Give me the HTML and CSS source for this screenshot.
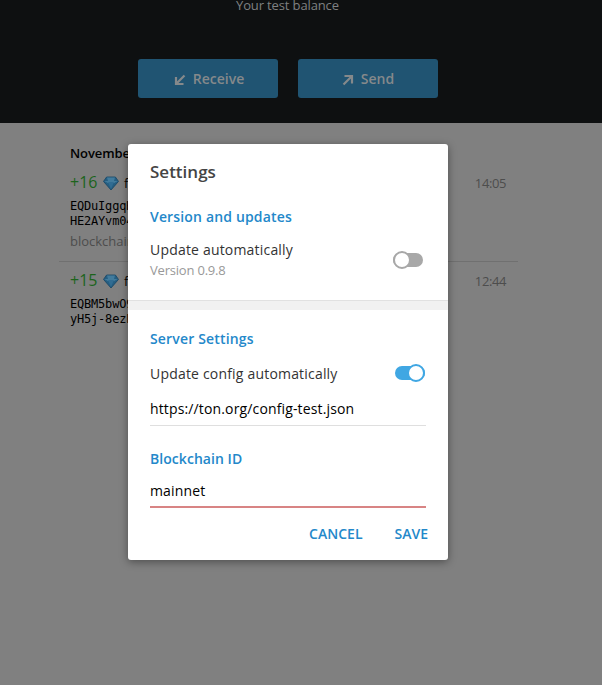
FILE: index.html
```html
<!DOCTYPE html>
<html lang="en">
<head>
<meta charset="utf-8">
<title>Wallet settings</title>
<link rel="stylesheet" href="styles.css">
</head>
<body>
<svg width="0" height="0" class="defs" aria-hidden="true">
  <symbol id="gem" viewBox="0 0 16 15">
    <path d="M3.6 1h8.8L15.5 5.4 8 14 .5 5.4z" fill="#255e82" stroke="#1c4968" stroke-width=".9" stroke-linejoin="round"/>
    <path d="M4 1.6h8L11 5H5z" fill="#427b9c"/>
    <path d="M1.2 5.2h13.6L8 8z" fill="#4d86a5"/>
    <path d="M5 6l3 7 3-7z" fill="#316c92"/>
  </symbol>
</svg>
<main class="wallet">
  <header class="top">
    <div class="balance">Your test balance</div>
    <div class="actions">
      <button class="action receive"><svg width="12" height="12" viewBox="0 0 12 12"><path d="M10.5 1.5L2 10M2 3v7h7.5"/></svg><span>Receive</span></button>
      <button class="action"><svg width="12" height="12" viewBox="0 0 12 12"><path d="M1.5 10.5L10 2M2.5 2H10v7.5"/></svg><span>Send</span></button>
    </div>
  </header>
  <section class="history">
    <h2 class="date">November</h2>
    <article class="entry">
      <div class="row"><span class="amount">+16</span><svg class="gem" width="16" height="15"><use href="#gem"/></svg><span class="from">from</span><time>14:05</time></div>
      <div class="address">EQDuIggqH<br>HE2AYvm04</div>
      <div class="fee">blockchain</div>
    </article>
    <article class="entry second">
      <div class="row"><span class="amount">+15</span><svg class="gem" width="16" height="15"><use href="#gem"/></svg><span class="from">from</span><time>12:44</time></div>
      <div class="address">EQBM5bwO9<br>yH5j-8ezE</div>
    </article>
  </section>
</main>
<div class="overlay">
  <div class="dialog" role="dialog">
    <section class="updates">
      <h1>Settings</h1>
      <h3>Version and updates</h3>
      <div class="option">
        <div><div class="label">Update automatically</div><div class="version">Version 0.9.8</div></div>
        <span class="toggle"></span>
      </div>
    </section>
    <div class="divider"></div>
    <section class="server">
      <h3>Server Settings</h3>
      <div class="option config">
        <div class="label">Update config automatically</div>
        <span class="toggle on"></span>
      </div>
      <div class="field url"><span>https://ton.org/config-test.json</span></div>
      <h3 class="chain-title">Blockchain ID</h3>
      <div class="field error"><span>mainnet</span></div>
      <div class="buttons"><button>CANCEL</button><button>SAVE</button></div>
    </section>
  </div>
</div>
</body>
</html>
```
FILE: styles.css
```css
*, *::before { box-sizing: border-box; }
body { margin: 0; height: 685px; overflow: hidden; background: #808080; color: #000; font: 14px/20px "Open Sans", sans-serif; position: relative; }
h1, h2, h3 { margin: 0; font-weight: 600; }
button { border: 0; padding: 0; background: none; font: inherit; }
.defs { position: absolute; }
.top { height: 123px; background: #0e1011; }
.balance { height: 59px; padding-left: 236px; font-size: 13px; line-height: 11px; letter-spacing: -.13px; color: #7f8081; white-space: nowrap; }
.actions { display: flex; gap: 20px; padding-left: 138px; }
.action { width: 140px; height: 39px; border-radius: 3px; background: #205472; color: #85898b; display: flex; align-items: center; justify-content: center; gap: 7px; font-weight: 600; }
.receive { padding-left: 2px; }
.action svg { fill: none; stroke: currentColor; stroke-width: 2.2; margin-top: 2px; }
.history { width: 459px; margin-left: 59px; padding-top: 20px; }
.date { padding-left: 11px; font-size: 13px; line-height: 20px; letter-spacing: -.1px; }
.entry { height: 98px; padding: 8px 11px 0; border-bottom: 1px solid #707070; margin-top: 1px; }
.entry.second { border: 0; margin-top: 0; }
.row { display: flex; align-items: center; height: 22px; }
.amount { width: 33px; font-size: 16px; line-height: 20px; margin-bottom: 2px; color: #1c641c; }
.from { margin-left: 5px; font-size: 13px; }
.row time { margin-left: auto; padding-right: 1px; color: #4d4d4d; font-size: 13px; letter-spacing: -.4px; }
.address { margin-top: 5px; font: 12px/15px "DejaVu Sans Mono", monospace; letter-spacing: -.2px; }
.fee { margin-top: 2px; line-height: 20px; font-size: 13px; color: #4d4d4d; }
.overlay { position: absolute; inset: 0; display: flex; justify-content: center; align-items: flex-start; padding: 144px 26px 0 0; }
.dialog { width: 320px; height: 416px; border-radius: 3px; background: #fff; overflow: hidden; box-shadow: 0 2px 8px rgba(0,0,0,.4); }
.updates { height: 156px; padding: 17px 22px 0; }
h1 { font-size: 17px; line-height: 22px; color: #444; }
h3 { font-size: 14px; line-height: 20px; letter-spacing: .16px; color: #2388ca; }
.updates h3 { margin-top: 24px; }
.option { display: flex; justify-content: space-between; align-items: center; }
.updates .option { margin-top: 13px; padding-right: 3px; }
.label { color: #333; letter-spacing: .19px; }
.version { font-size: 13px; letter-spacing: -.2px; color: #999; }
.toggle { position: relative; width: 30px; height: 14px; border-radius: 7px; background: #a8a8a8; }
.toggle::before { content: ""; position: absolute; left: 0; top: -2px; width: 18px; height: 18px; border: 2px solid #a8a8a8; border-radius: 50%; background: #fff; }
.toggle.on { background: #40a7e3; }
.toggle.on::before { left: auto; right: 0; border-color: #40a7e3; }
.divider { height: 10px; background: #f1f1f1; border-top: 1px solid #e1e1e1; }
.server { padding: 19px 22px 0; }
.config { height: 20px; margin-top: 14px; padding-right: 1px; }
.config .label { padding-top: 1px; }
.field { border-bottom: 1px solid #dfdfdf; color: #000; letter-spacing: .14px; }
.url { height: 43px; padding-top: 16px; }
.chain-title { margin-top: 23px; letter-spacing: .05px; }
.error { height: 39px; padding-top: 12px; border-bottom: 2px solid #d88484; }
.buttons { display: flex; justify-content: flex-end; gap: 32px; margin: 16px -2px 0; }
.buttons button { color: #2388ca; font-weight: 600; line-height: 20px; }
```
